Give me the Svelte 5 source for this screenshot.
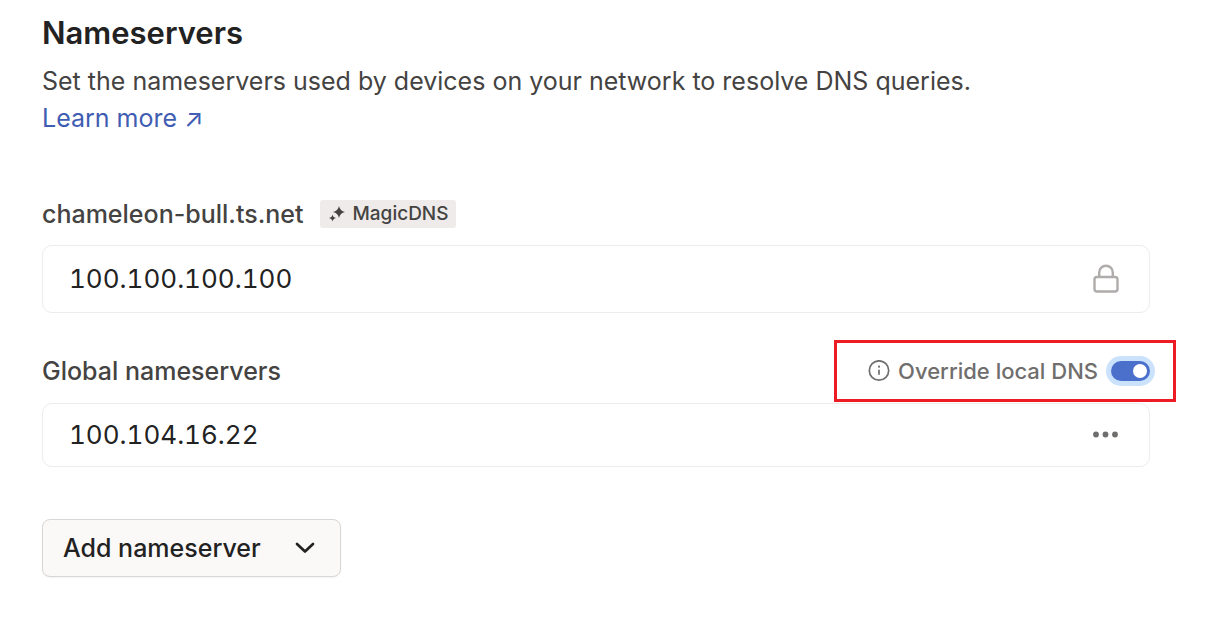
<script>
  let override = $state(true);
</script>

<main>
  <header>
    <h1>Nameservers</h1>
    <p>
      Set the nameservers used by devices on your network to resolve DNS queries.
      <br /><a href="#learn-more">Learn more ↗</a>
    </p>
  </header>

  <section>
    <div class="head">
      <h2>chameleon-bull.ts.net</h2>
      <span class="tag">
        <svg width="18" height="18" viewBox="0 0 18 18" aria-hidden="true">
          <path fill="currentColor" d="M11 1 Q12 6 17 7 Q12 8 11 13 Q10 8 5 7 Q10 6 11 1Z" />
          <path fill="currentColor" d="M4.500 9.500 Q5 12.500 8 13 Q5 13.500 4.500 16.500 Q4 13.500 1 13 Q4 12.500 4.500 9.500Z" />
        </svg>
        MagicDNS
      </span>
    </div>
    <div class="server locked">
      <span>100.100.100.100</span>
      <svg width="32" height="32" viewBox="0 0 32 32" fill="none" stroke="#afacab" stroke-width="2.4" role="img" aria-label="Locked">
        <rect x="4.500" y="14" width="23" height="14.500" rx="2.500" />
        <path d="M9.200 14 V9.500 a6.800 6.800 0 0 1 13.600 0 V14" />
      </svg>
    </div>
  </section>

  <section>
    <div class="head">
      <h2>Global nameservers</h2>
      <div class="override">
        <svg width="22" height="22" viewBox="0 0 22 22" fill="none" stroke="currentColor" stroke-width="1.700" aria-hidden="true">
          <circle cx="11" cy="10.500" r="9.700" />
          <path d="M11 9.800 V14.800" />
          <circle cx="11" cy="6.700" r="1.100" fill="currentColor" stroke="none" />
        </svg>
        <label for="override">Override local DNS</label>
        <input id="override" type="checkbox" role="switch" bind:checked={override} />
      </div>
    </div>
    <div class="server">
      <span>100.104.16.22</span>
      <button class="more" aria-label="Nameserver options">
        <svg width="32" height="32" viewBox="0 0 32 32" fill="currentColor" aria-hidden="true">
          <circle cx="6" cy="15.500" r="2.900" />
          <circle cx="15.500" cy="15.500" r="2.900" />
          <circle cx="25" cy="15.500" r="2.900" />
        </svg>
      </button>
    </div>
  </section>

  <button class="add">
    Add nameserver
    <svg width="24" height="24" viewBox="0 0 24 24" fill="none" stroke="currentColor" stroke-width="2.700" stroke-linecap="round" stroke-linejoin="round" aria-hidden="true">
      <path d="M4 8 L12 15.500 L20 8" />
    </svg>
  </button>
</main>

<style>
  :global(body) {
    background: #fff;
  }
  main {
    padding: 13px 73px 44px 42px;
    font-family: Inter, sans-serif;
    font-size: 25px;
    line-height: 37px;
    color: #444342;
  }
  h1,
  h2,
  p {
    margin: 0;
  }
  h1 {
    font-size: 31px;
    line-height: 40px;
    font-weight: 600;
    color: #232222;
  }
  h2 {
    font-size: 25px;
    line-height: 36px;
    font-weight: 500;
  }
  header {
    margin-bottom: 59px;
  }
  p {
    margin-top: 10px;
  }
  a {
    color: #3f5db3;
    text-decoration: none;
  }
  section {
    margin-bottom: 40px;
  }
  .head {
    display: flex;
    align-items: center;
    gap: 17px;
    margin-bottom: 13px;
  }
  .tag {
    display: inline-flex;
    align-items: center;
    gap: 6px;
    padding: 0 7px 0 8px;
    border-radius: 3px;
    background: #eeebea;
    font-size: 19px;
    line-height: 28px;
    font-weight: 500;
  }
  .server {
    display: flex;
    align-items: center;
    justify-content: space-between;
    padding: 13px 27px 13px 26px;
    border: 1px solid #eeebea;
    border-radius: 10px;
    font-size: 26px;
    line-height: 36px;
    color: #232222;
    font-variant-numeric: tabular-nums;
  }
  .locked {
    padding-block: 15px;
  }
  section + section .head {
    margin-bottom: 14px;
  }
  .override {
    position: relative;
    display: flex;
    align-items: center;
    gap: 8px;
    margin-left: auto;
    font-size: 22px;
    line-height: 32px;
    font-weight: 500;
    color: #706e6d;
  }
  .override::after {
    content: "";
    position: absolute;
    inset: -15px -26px -15px -34px;
    border: 3px solid #ed1c24;
    pointer-events: none;
  }
  input {
    appearance: none;
    display: flex;
    justify-content: flex-end;
    width: 39px;
    height: 20px;
    margin: 0 0 0 5px;
    padding: 3px;
    border-radius: 10px;
    background: #4b70cc;
    box-shadow: 0 0 0 5px #cbe2fd;
  }
  input::before {
    content: "";
    width: 14px;
    height: 14px;
    border-radius: 50%;
    background: #fff;
  }
  input:not(:checked) {
    justify-content: flex-start;
    background: #afacab;
  }
  button {
    font: inherit;
    cursor: pointer;
  }
  .more {
    display: flex;
    padding: 0;
    border: 0;
    background: none;
    color: #706e6d;
  }
  .add {
    display: flex;
    align-items: center;
    gap: 32px;
    margin-top: 52px;
    padding: 10px 23px 10px 20px;
    border: 1px solid #dad6d5;
    border-radius: 8px;
    background: #faf9f8;
    box-shadow: 0 1px 2px #0000000d;
    line-height: 36px;
    font-weight: 500;
    color: #232222;
  }
</style>
